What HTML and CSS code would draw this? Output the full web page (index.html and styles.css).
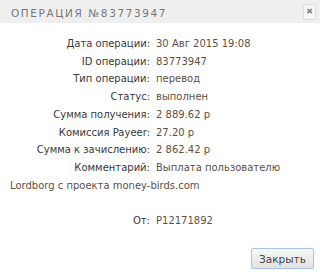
FILE: index.html
```html
<!DOCTYPE html>
<html lang="ru">
<head>
    <meta charset="UTF-8">
    <title>Операция №83773947</title>
    <link rel="stylesheet" href="styles.css">
</head>
<body>
    <div class="dialog">
        <div class="dialog-head">
            <span class="dialog-title">Операция №83773947</span>
            <button class="close-x" type="button">&#10006;</button>
        </div>
        <div class="dialog-body">
            <div class="row"><span class="label">Дата операции:</span><span class="value">30 Авг 2015 19:08</span></div>
            <div class="row"><span class="label">ID операции:</span><span class="value">83773947</span></div>
            <div class="row"><span class="label">Тип операции:</span><span class="value">перевод</span></div>
            <div class="row"><span class="label">Статус:</span><span class="value">выполнен</span></div>
            <div class="row"><span class="label">Сумма получения:</span><span class="value">2 889.62 р</span></div>
            <div class="row"><span class="label">Комиссия Payeer:</span><span class="value">27.20 р</span></div>
            <div class="row"><span class="label">Сумма к зачислению:</span><span class="value">2 862.42 р</span></div>
            <div class="row"><span class="label">Комментарий:</span><span class="value">Выплата пользователю Lordborg с проекта money-birds.com</span></div>
            <div class="row spacer"></div>
            <div class="row"><span class="label">От:</span><span class="value">P12171892</span></div>
        </div>
        <div class="dialog-foot">
            <button class="btn" type="button">Закрыть</button>
        </div>
    </div>
</body>
</html>
```

FILE: styles.css
```css
body { margin: 0; background: #fff; font-family: "DejaVu Sans", "Noto Sans", sans-serif; color: #333; }
.dialog { width: 320px; height: 273px; display: flex; flex-direction: column; box-sizing: border-box; }
.dialog-head { height: 23px; background: #efefef; display: flex; align-items: center; justify-content: space-between; padding: 0 4px 0 11px; }
.dialog-title { text-transform: uppercase; font-size: 10.5px; letter-spacing: 1.6px; color: #777; padding-top: 2px; }
.close-x { width: 13px; height: 16px; padding: 0; border: 1px solid #dcdcdc; border-radius: 2px; background: #f6f6f6; color: #888; font-size: 8px; line-height: 14px; font-family: "DejaVu Sans", sans-serif; }
.dialog-body { padding: 12px 10px 0 10px; font-size: 10px; line-height: 17.7px; }
.row { min-height: 17.7px; }
.spacer { height: 17.7px; }
.label { display: inline-block; width: 140px; text-align: right; margin-right: 6px; color: #383838; }
.value { color: #5e5040; }
.dialog-foot { margin-top: auto; display: flex; justify-content: flex-end; padding: 0 6px 4px 0; }
.btn { width: 63px; height: 21px; border: 1px solid #a8c4ec; border-radius: 2px; background: linear-gradient(#f7f7f7, #e2e2e2); color: #444; font-family: "DejaVu Sans", sans-serif; font-size: 10.5px; padding: 0; }
```
